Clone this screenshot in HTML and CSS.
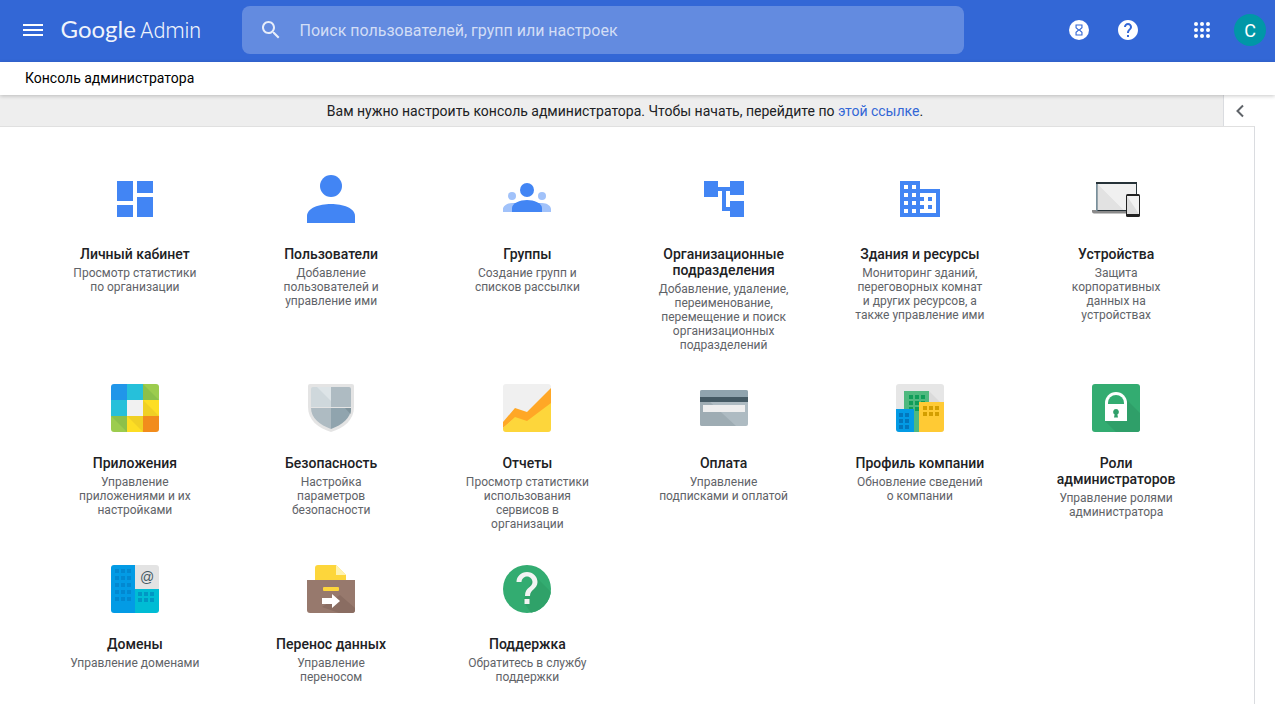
FILE: index.html
```html
<!DOCTYPE html>
<html lang="ru">
<head>
    <meta charset="UTF-8">
    <title>Консоль администратора</title>
    <link rel="stylesheet" href="styles.css">
</head>
<body>
    <header class="topBar">
        <svg class="menuIcon" width="20" height="12" viewBox="0 0 20 12"><path fill="#fff" d="M0 0h20v2H0zM0 5h20v2H0zM0 10h20v2H0z"/></svg>
        <div class="logo"><span class="logoGoogle">Google</span> <span class="logoAdmin">Admin</span></div>
        <div class="searchBox">
            <svg class="searchIcon" width="24" height="24" viewBox="0 0 24 24"><path fill="#fff" d="M15.5 14h-.79l-.28-.27C15.41 12.59 16 11.11 16 9.5 16 5.91 13.09 3 9.5 3S3 5.91 3 9.5 5.91 16 9.5 16c1.61 0 3.09-.59 4.23-1.57l.27.28v.79l5 4.99L20.49 19l-4.99-5zm-6 0C7.01 14 5 11.99 5 9.5S7.01 5 9.5 5 14 7.01 14 9.5 11.99 14 9.5 14z"/></svg>
            <span class="searchText">Поиск пользователей, групп или настроек</span>
        </div>
        <div class="topIcons">
            <svg class="hourglass" width="20" height="20" viewBox="0 0 20 20"><circle cx="10" cy="10" r="10" fill="#fff"/><path fill="#3367d6" d="M6.500 4.500h7v3.500L11.200 10l2.300 2v3.500h-7V12l2.300-2-2.300-2zM7.600 5.500v2L10 9.500l2.400-2v-2zM10 10.500l-2.400 2v2h4.800v-2z"/></svg>
            <svg class="helpIcon" width="24" height="24" viewBox="0 0 24 24"><path fill="#fff" d="M12 2C6.48 2 2 6.48 2 12s4.48 10 10 10 10-4.48 10-10S17.52 2 12 2zm1 17h-2v-2h2v2zm2.07-7.75l-.9.92C13.45 12.9 13 13.5 13 15h-2v-.5c0-1.1.45-2.1 1.17-2.83l1.24-1.26c.37-.36.59-.86.59-1.41 0-1.1-.9-2-2-2s-2 .9-2 2H8c0-2.21 1.79-4 4-4s4 1.79 4 4c0 .88-.36 1.68-.93 2.25z"/></svg>
            <svg class="appsIcon" width="16" height="16" viewBox="0 0 16 16" fill="#fff"><circle cx="2" cy="2" r="2"/><circle cx="8" cy="2" r="2"/><circle cx="14" cy="2" r="2"/><circle cx="2" cy="8" r="2"/><circle cx="8" cy="8" r="2"/><circle cx="14" cy="8" r="2"/><circle cx="2" cy="14" r="2"/><circle cx="8" cy="14" r="2"/><circle cx="14" cy="14" r="2"/></svg>
            <div class="avatar">С</div>
        </div>
    </header>

    <div class="crumbBar">Консоль администратора</div>

    <div class="noticeRow">
        <p class="notice">Вам нужно настроить консоль администратора. Чтобы начать, перейдите по <a href="#">этой ссылке</a>.</p>
        <div class="collapseTab">
            <svg width="10" height="14" viewBox="0 0 10 14"><path fill="none" stroke="#5f6368" stroke-width="2" d="M8 1.500L2.500 7 8 12.500"/></svg>
        </div>
    </div>

    <main class="card">
        <div class="tiles">
            <section class="tile">
                <svg class="tileIcon" viewBox="0 0 24 24"><path fill="#4285f4" d="M3 13h8V3H3v10zm0 8h8v-6H3v6zm10 0h8V11h-8v10zm0-18v6h8V3h-8z"/></svg>
                <h3>Личный кабинет</h3>
                <p>Просмотр статистики по организации</p>
            </section>
            <section class="tile">
                <svg class="tileIcon" viewBox="0 0 48 48" fill="#4285f4"><circle cx="24" cy="11" r="11"/><path d="M0 48v-7c0-8 12-12 24-12s24 4 24 12v7z"/></svg>
                <h3>Пользователи</h3>
                <p>Добавление пользователей и управление ими</p>
            </section>
            <section class="tile">
                <svg class="tileIcon" viewBox="0 0 48 48"><g fill="#a1c2fa"><circle cx="9" cy="21" r="4"/><circle cx="39" cy="21" r="4"/><path d="M0 37v-3c0-3 4-6 9-6 6 0 12 2 15 5v4zM48 37v-3c0-3-4-6-9-6-6 0-12 2-15 5v4z"/></g><g fill="#4285f4"><circle cx="24" cy="15" r="7"/><path d="M9 37v-4c0-5 8-8 15-8s15 3 15 8v4z"/></g></svg>
                <h3>Группы</h3>
                <p>Создание групп и списков рассылки</p>
            </section>
            <section class="tile">
                <svg class="tileIcon" viewBox="0 0 48 48"><path fill="#4285f4" d="M4 6h14v16H4zM30 6h14v14H30zM30 26h14v16H30zM18 12h12v4H26v16h4v4H22V16h-4z"/></svg>
                <h3>Организационные подразделения</h3>
                <p>Добавление, удаление, переименование, перемещение и поиск организационных подразделений</p>
            </section>
            <section class="tile">
                <svg class="tileIcon" viewBox="0 0 24 24"><path fill="#4285f4" d="M12 7V3H2v18h20V7H12zM6 19H4v-2h2v2zm0-4H4v-2h2v2zm0-4H4V9h2v2zm0-4H4V5h2v2zm4 12H8v-2h2v2zm0-4H8v-2h2v2zm0-4H8V9h2v2zm0-4H8V5h2v2zm10 12h-8v-2h2v-2h-2v-2h2v-2h-2V9h8v10zm-2-8h-2v2h2v-2zm0 4h-2v2h2v-2z"/></svg>
                <h3>Здания и ресурсы</h3>
                <p>Мониторинг зданий, переговорных комнат и других ресурсов, а также управление ими</p>
            </section>
            <section class="tile">
                <svg class="tileIcon" viewBox="0 0 48 48"><path fill="#8a8a8a" d="M0 35h36v3.500H2a2 2 0 0 1-2-2z"/><rect x="4" y="7" width="41" height="29" fill="#263238"/><rect x="5.500" y="9" width="38.500" height="26" fill="#f0f0f0"/><path fill="#e2e2e2" d="M5.500 9l26 26h-26z"/><path fill="#78909c" d="M4 9h1.500v27H4z"/><rect x="34" y="19" width="14" height="23" rx="1.500" fill="#212121"/><rect x="35" y="21" width="12" height="18" fill="#f2f2f2"/><path fill="#dedede" d="M35 21l12 18H35z"/></svg>
                <h3>Устройства</h3>
                <p>Защита корпоративных данных на устройствах</p>
            </section>

            <section class="tile">
                <svg class="tileIcon" viewBox="0 0 48 48"><defs><clipPath id="appsClip"><rect width="48" height="48" rx="3"/></clipPath></defs><g clip-path="url(#appsClip)"><path fill="#2196e9" d="M0 0h16v16H0z"/><path fill="#26c0da" d="M16 0h16v16H16zM0 16h16v16H0z"/><path fill="#9ccc4e" d="M32 0h16v16H32zM0 32h16v16H0z"/><path fill="#8cc04a" d="M32 0l16 16H32zM0 32l16 16V32z"/><path fill="#f1f1f1" d="M16 16h16v16H16z"/><path fill="#fdde24" d="M32 16h16v16H32zM16 32h16v16H16z"/><path fill="#f0d024" d="M32 16l16 16H32zM16 32l16 16V32z"/><path fill="#f28c1c" d="M32 32h16v16H32z"/></g></svg>
                <h3>Приложения</h3>
                <p>Управление приложениями и их настройками</p>
            </section>
            <section class="tile">
                <svg class="tileIcon" viewBox="0 0 48 48"><path fill="#e4e4e4" d="M3 0h42a2 2 0 0 1 2 2v21c0 13-10 21-23 25C11 44 1 36 1 23V2a2 2 0 0 1 2-2z"/><path fill="#cfd8dc" d="M6 3h18v20H4V5a2 2 0 0 1 2-2z"/><path fill="#dde4e7" d="M10 3h14v14z"/><path fill="#aebbc2" d="M24 3h18a2 2 0 0 1 2 2v18H24zM4 24h20v21C13 41 4 34 4 24z"/><path fill="#90a4ae" d="M24 24h20c0 10-9 17-20 21z"/><path fill="#7f939c" d="M24 24h14l5.500 6c.3-2 .5-4 .5-6z"/></svg>
                <h3>Безопасность</h3>
                <p>Настройка параметров безопасности</p>
            </section>
            <section class="tile">
                <svg class="tileIcon" viewBox="0 0 48 48"><rect width="48" height="48" rx="3" fill="#f0f0f0"/><path fill="#ffa726" d="M0 38l12-14 12 4L48 4v16L24 38l-12-4L0 44z"/><path fill="#fdd63b" d="M0 44l12-11 12 4 24-18v26a3 3 0 0 1-3 3H3a3 3 0 0 1-3-3z"/></svg>
                <h3>Отчеты</h3>
                <p>Просмотр статистики использования сервисов в организации</p>
            </section>
            <section class="tile">
                <svg class="tileIcon" viewBox="0 0 48 48"><rect y="6" width="48" height="36" rx="2" fill="#aebbc2"/><path fill="#9eacb3" d="M2 42a2 2 0 0 1-2-2V18h10l26 24z"/><path fill="#90a4ae" d="M0 8a2 2 0 0 1 2-2h44a2 2 0 0 1 2 2v5H0z"/><rect y="13" width="48" height="5" fill="#455a64"/><rect x="3" y="21" width="42" height="7" fill="#eeeeee"/></svg>
                <h3>Оплата</h3>
                <p>Управление подписками и оплатой</p>
            </section>
            <section class="tile">
                <svg class="tileIcon" viewBox="0 0 48 48"><rect width="48" height="48" rx="3" fill="#e6e6e6"/><path fill="#dadada" d="M33 7l15 15v10H33z"/><rect x="8" y="7" width="25" height="41" fill="#4fb97f"/><path fill="#0f9d58" d="M13 11h4v4h-4zM19 11h4v4h-4zM25 11h4v4h-4zM13 17h4v4h-4zM19 17h4v4h-4zM25 17h4v4h-4zM13 23h4v4h-4zM19 23h4v4h-4z"/><path fill="#039be5" d="M0 25h18v23H3a3 3 0 0 1-3-3z"/><path fill="#0277bd" d="M3 29h4v4H3zM9 29h4v4H9zM3 35h4v4H3zM9 35h4v4H9zM3 41h4v4H3zM9 41h4v4H9z"/><path fill="#ffca34" d="M23 18h25v27a3 3 0 0 1-3 3H23z"/><path fill="#d39e00" d="M27 22h4v4h-4zM33 22h4v4h-4zM39 22h4v4h-4zM27 28h4v4h-4zM33 28h4v4h-4zM39 28h4v4h-4z"/></svg>
                <h3>Профиль компании</h3>
                <p>Обновление сведений о компании</p>
            </section>
            <section class="tile">
                <svg class="tileIcon" viewBox="0 0 48 48"><rect width="48" height="48" rx="3" fill="#33ac71"/><path fill="#2f9f69" d="M35 16l13 13v16a3 3 0 0 1-3 3H24L13 37h22z"/><path fill="#fff" d="M13 37V19a11 11 0 0 1 22 0v18z"/><path fill="#33ac71" d="M16 20v-1a8 8 0 0 1 16 0v1z"/><path fill="#2f9f69" d="M24 25a3 3 0 0 1 1.400 5.600l.6 3h-4l.6-3A3 3 0 0 1 24 25z"/></svg>
                <h3>Роли администраторов</h3>
                <p>Управление ролями администратора</p>
            </section>

            <section class="tile">
                <svg class="tileIcon" viewBox="0 0 48 48"><defs><clipPath id="domainClip"><rect width="48" height="48" rx="3"/></clipPath></defs><g clip-path="url(#domainClip)"><rect width="24" height="48" fill="#039be5"/><rect x="24" width="24" height="24" fill="#e3e3e3"/><rect x="24" y="24" width="24" height="24" fill="#00bcd4"/><path fill="#0288d1" d="M4 4h4v4H4zM10 4h4v4h-4zM16 4h4v4h-4zM4 11h4v4H4zM10 11h4v4h-4zM16 11h4v4h-4zM4 18h4v4H4zM10 18h4v4h-4zM16 18h4v4h-4zM4 25h4v4H4zM10 25h4v4h-4zM16 25h4v4h-4zM4 32h4v4H4zM10 32h4v4h-4zM16 32h4v4h-4z"/><path fill="#0097c4" d="M27 27h4v4h-4zM33 27h4v4h-4zM39 27h4v4h-4zM27 33h4v4h-4zM33 33h4v4h-4zM39 33h4v4h-4z"/><text x="36" y="17" class="atSign">@</text></g></svg>
                <h3>Домены</h3>
                <p>Управление доменами</p>
            </section>
            <section class="tile">
                <svg class="tileIcon" viewBox="0 0 48 48"><path fill="#fdd63b" d="M8 3a3 3 0 0 1 3-3h18l10 10v8H8z"/><path fill="#fff3b0" d="M29 0l10 10H29z"/><path fill="#97796d" d="M0 15h48v30a3 3 0 0 1-3 3H3a3 3 0 0 1-3-3z"/><path fill="#8a6d62" d="M33 30l15 13v2a3 3 0 0 1-3 3H32L15 42z"/><rect x="16" y="22" width="16" height="4" rx="1" fill="#fdd63b"/><path fill="#fff" d="M15 33h10v-4l8 7-8 7v-4H15z"/></svg>
                <h3>Перенос данных</h3>
                <p>Управление переносом</p>
            </section>
            <section class="tile">
                <svg class="tileIcon" viewBox="0 0 48 48"><defs><clipPath id="helpClip"><circle cx="24" cy="24" r="24"/></clipPath></defs><circle cx="24" cy="24" r="24" fill="#33ac71"/><path clip-path="url(#helpClip)" fill="#2fa269" d="M31 10l17 17v21H28L20 36z"/><path fill="#f3f3f3" d="M21.500 39h5v-5h-5zM24 7c-6 0-10.500 4.500-10.500 10h5c0-3 2.500-5.500 5.500-5.500s5.500 2.500 5.500 5.500c0 5.500-7.500 5-7.500 14h5c0-6.500 7.500-7 7.500-14 0-5.500-4.500-10-10.500-10z"/></svg>
                <h3>Поддержка</h3>
                <p>Обратитесь в службу поддержки</p>
            </section>
        </div>
    </main>
</body>
</html>
```

FILE: styles.css
```css
* {
    box-sizing: border-box;
}

body {
    margin: 0;
    height: 704px;
    overflow: hidden;
    background-color: #fff;
    font-family: Roboto, "Liberation Sans", sans-serif;
    color: #202124;
}

.topBar {
    display: flex;
    align-items: center;
    height: 62px;
    padding: 0 0 2px 23px;
    background-color: #3367d6;
}

.menuIcon {
    flex: none;
}

.logo {
    width: 181px;
    margin-left: 17.500px;
    color: #fff;
    font-family: Lato, sans-serif;
    font-size: 24px;
    line-height: 28px;
    word-spacing: -2px;
    opacity: 0.92;
    white-space: nowrap;
}

.logoAdmin {
    font-family: Roboto, sans-serif;
    font-size: 21.500px;
    font-weight: 300;
}

.searchBox {
    display: flex;
    align-items: center;
    width: 722px;
    height: 48px;
    margin-left: 0.500px;
    padding-left: 17px;
    background-color: rgba(255, 255, 255, 0.24);
    border-radius: 8px;
}

.searchIcon {
    opacity: 0.85;
}

.searchText {
    margin-left: 16.500px;
    font-size: 16px;
    color: rgba(255, 255, 255, 0.72);
}

.topIcons {
    display: flex;
    align-items: center;
    margin-left: 105px;
}

.helpIcon {
    margin-left: 27px;
}

.appsIcon {
    margin-left: 54px;
}

.avatar {
    display: flex;
    align-items: center;
    justify-content: center;
    width: 32px;
    height: 32px;
    margin-left: 24px;
    border-radius: 50%;
    background-color: #0097a7;
    color: #fff;
    font-size: 18px;
}

.crumbBar {
    position: relative;
    height: 33px;
    padding-left: 25px;
    font-size: 14px;
    line-height: 33px;
    color: #000;
    background-color: #fff;
    box-shadow: 0 1px 4px rgba(0, 0, 0, 0.22);
}

.noticeRow {
    display: flex;
    height: 31px;
}

.notice {
    width: 1223px;
    margin: 0;
    padding-left: 27px;
    background-color: #eeeeee;
    text-align: center;
    font-size: 14px;
    line-height: 32px;
}

.notice a {
    color: #3367d6;
    text-decoration: none;
}

.collapseTab {
    display: flex;
    flex: 1;
    align-items: center;
    padding-left: 11px;
    border-left: 1px solid #dadce0;
}

.card {
    width: 1255px;
    height: 578px;
    padding: 48px 0 0 36.750px;
    background-color: #fff;
    border-top: 1px solid #e0e0e0;
    border-right: 1px solid #dadce0;
}

.tiles {
    display: grid;
    grid-template-columns: repeat(6, 196.25px);
    grid-template-rows: 209px 181px auto;
}

.tile {
    display: flex;
    flex-direction: column;
    align-items: center;
    text-align: center;
}

.tileIcon {
    flex: none;
    width: 48px;
    height: 48px;
    margin-bottom: 23px;
}

.tile h3 {
    width: 130px;
    margin: 0 0 4px;
    font-size: 14px;
    font-weight: 500;
    line-height: 16px;
    color: #202124;
}

.tile p {
    width: 130px;
    margin: 0;
    font-size: 12px;
    line-height: 14px;
    color: #5f6368;
}

.atSign {
    font-family: "Liberation Sans", sans-serif;
    font-size: 14px;
    fill: #455a64;
    text-anchor: middle;
}
```
